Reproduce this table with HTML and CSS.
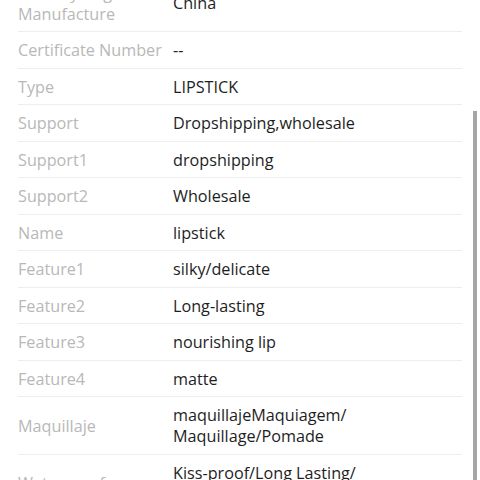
FILE: index.html
```html
<!DOCTYPE html>
<html lang="en">
<head>
<meta charset="utf-8">
<title>Specifications</title>
<link rel="stylesheet" href="styles.css">
</head>
<body>
<div class="viewport">
  <div class="specs">
    <div class="row"><div class="label">Country/Region of Manufacture</div><div class="value">China</div></div>
    <div class="row"><div class="label">Certificate Number</div><div class="value">--</div></div>
    <div class="row"><div class="label">Type</div><div class="value">LIPSTICK</div></div>
    <div class="row"><div class="label">Support</div><div class="value">Dropshipping,wholesale</div></div>
    <div class="row"><div class="label">Support1</div><div class="value">dropshipping</div></div>
    <div class="row"><div class="label">Support2</div><div class="value">Wholesale</div></div>
    <div class="row"><div class="label">Name</div><div class="value">lipstick</div></div>
    <div class="row"><div class="label">Feature1</div><div class="value">silky/delicate</div></div>
    <div class="row"><div class="label">Feature2</div><div class="value">Long-lasting</div></div>
    <div class="row"><div class="label">Feature3</div><div class="value">nourishing lip</div></div>
    <div class="row"><div class="label">Feature4</div><div class="value">matte</div></div>
    <div class="row"><div class="label">Maquillaje</div><div class="value">maquillajeMaquiagem/ Maquillage/Pomade</div></div>
    <div class="row"><div class="label">Waterproof</div><div class="value">Kiss-proof/Long Lasting/ Waterproof</div></div>
  </div>
  <div class="scrollbar"></div>
</div>
</body>
</html>
```
FILE: styles.css
```css
html, body {
  margin: 0;
  padding: 0;
  background: #ffffff;
}
body {
  font-family: "Open Sans", "Liberation Sans", sans-serif;
  font-size: 16.2px;
  overflow: hidden;
}
.viewport {
  position: relative;
  width: 480px;
  height: 480px;
  overflow: hidden;
}
.specs {
  margin-top: -25.5px;
  padding: 0 18px;
}
.row {
  display: flex;
  align-items: center;
  padding: 8px 0 6.5px;
  border-bottom: 1px solid #eeeeee;
  line-height: 21px;
}
.label {
  width: 155px;
  flex: none;
  color: #b8b8b8;
}
.value {
  flex: 1;
  color: #1e1e1e;
  padding-right: 30px;
}
.scrollbar {
  position: absolute;
  left: 473px;
  top: 111px;
  width: 4px;
  height: 369px;
  background: #a6a6a6;
}
```
